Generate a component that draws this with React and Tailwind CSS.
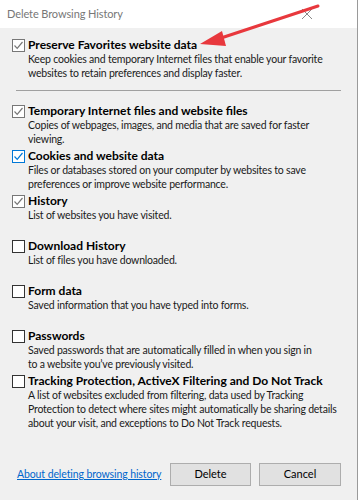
import React from 'react';

const font = { fontFamily: 'Lato, "Segoe UI", Arial, sans-serif' };

const Check = ({ checked, color }) => (
  <span
    className="relative flex h-[13px] w-[13px] shrink-0 items-center justify-center border bg-white"
    style={{ borderColor: color }}
  >
    {checked && (
      <svg width="11" height="11" viewBox="0 0 11 11" fill="none">
        <polyline points="1.5,5.5 4.2,8.3 9.5,2" stroke={color} strokeWidth="1.2" />
      </svg>
    )}
  </span>
);

const Item = ({ title, desc, checked, color = '#333333' }) => (
  <div className="h-[45px] whitespace-nowrap">
    <div className="flex h-[14px] items-center">
      <div className="flex w-[16px] justify-start">
        <Check checked={checked} color={color} />
      </div>
      <span className="text-[12px] font-bold leading-[14px] text-black">{title}</span>
    </div>
    <div className="pl-[16px] text-[10.5px] leading-[14px] tracking-[-0.2px] text-[#1a1a1a]">
      {desc.map((line, i) => (
        <div key={i}>{line}</div>
      ))}
    </div>
  </div>
);

const items = [
  {
    title: 'Temporary Internet files and website files',
    desc: ['Copies of webpages, images, and media that are saved for faster', 'viewing.'],
    checked: true,
    color: '#777777',
  },
  {
    title: 'Cookies and website data',
    desc: ['Files or databases stored on your computer by websites to save', 'preferences or improve website performance.'],
    checked: true,
    color: '#0078d7',
  },
  {
    title: 'History',
    desc: ['List of websites you have visited.'],
    checked: true,
    color: '#777777',
  },
  { title: 'Download History', desc: ['List of files you have downloaded.'] },
  { title: 'Form data', desc: ['Saved information that you have typed into forms.'] },
  {
    title: 'Passwords',
    desc: ['Saved passwords that are automatically filled in when you sign in', 'to a website you\u2019ve previously visited.'],
  },
  {
    title: 'Tracking Protection, ActiveX Filtering and Do Not Track',
    desc: [
      'A list of websites excluded from filtering, data used by Tracking',
      'Protection to detect where sites might automatically be sharing details',
      'about your visit, and exceptions to Do Not Track requests.',
    ],
  },
];

export default function App() {
  return (
    <div className="relative flex h-[500px] w-[358px] flex-col overflow-hidden border-r border-[#9a9a9a] bg-[#f0f0f0]" style={font}>
      {/* Title bar */}
      <div className="flex h-[28px] shrink-0 items-center justify-between bg-white pl-[7px] pr-[44px]">
        <span className="text-[11px] tracking-[-0.1px] text-[#777777]">Delete Browsing History</span>
        <svg width="12" height="12" viewBox="0 0 12 12" stroke="#888888" strokeWidth="1">
          <line x1="1" y1="1" x2="11" y2="11" />
          <line x1="11" y1="1" x2="1" y2="11" />
        </svg>
      </div>

      <div className="flex flex-1 flex-col pl-[12px] pr-[16px] pt-[10px]">
        <Item
          title="Preserve Favorites website data"
          desc={['Keep cookies and temporary Internet files that enable your favorite', 'websites to retain preferences and display faster.']}
          checked
          color="#777777"
        />
        <div className="mb-[13px] ml-[4px] mt-[7px] h-px bg-[#a0a0a0]" />
        {items.map((it) => (
          <Item key={it.title} {...it} />
        ))}

        <div className="mt-auto mb-[14px] flex items-center whitespace-nowrap">
          <a href="#" className="ml-[5px] text-[10.5px] tracking-[-0.1px] text-[#0066cc] underline">
            About deleting browsing history
          </a>
          <div className="ml-auto flex gap-[8px]">
            <button className="h-[23px] w-[81px] border border-[#adadad] bg-[#e1e1e1] text-[11px] text-black">Delete</button>
            <button className="h-[23px] w-[82px] border border-[#adadad] bg-[#e1e1e1] text-[11px] text-black">Cancel</button>
          </div>
        </div>
      </div>

      {/* Red annotation arrow */}
      <svg className="pointer-events-none absolute left-0 top-0" width="358" height="60">
        <line x1="318" y1="6" x2="218" y2="39" stroke="#e8383d" strokeWidth="3" strokeLinecap="round" />
        <polygon points="200,44 222,31 226,46" fill="#e8383d" />
      </svg>
    </div>
  );
}
